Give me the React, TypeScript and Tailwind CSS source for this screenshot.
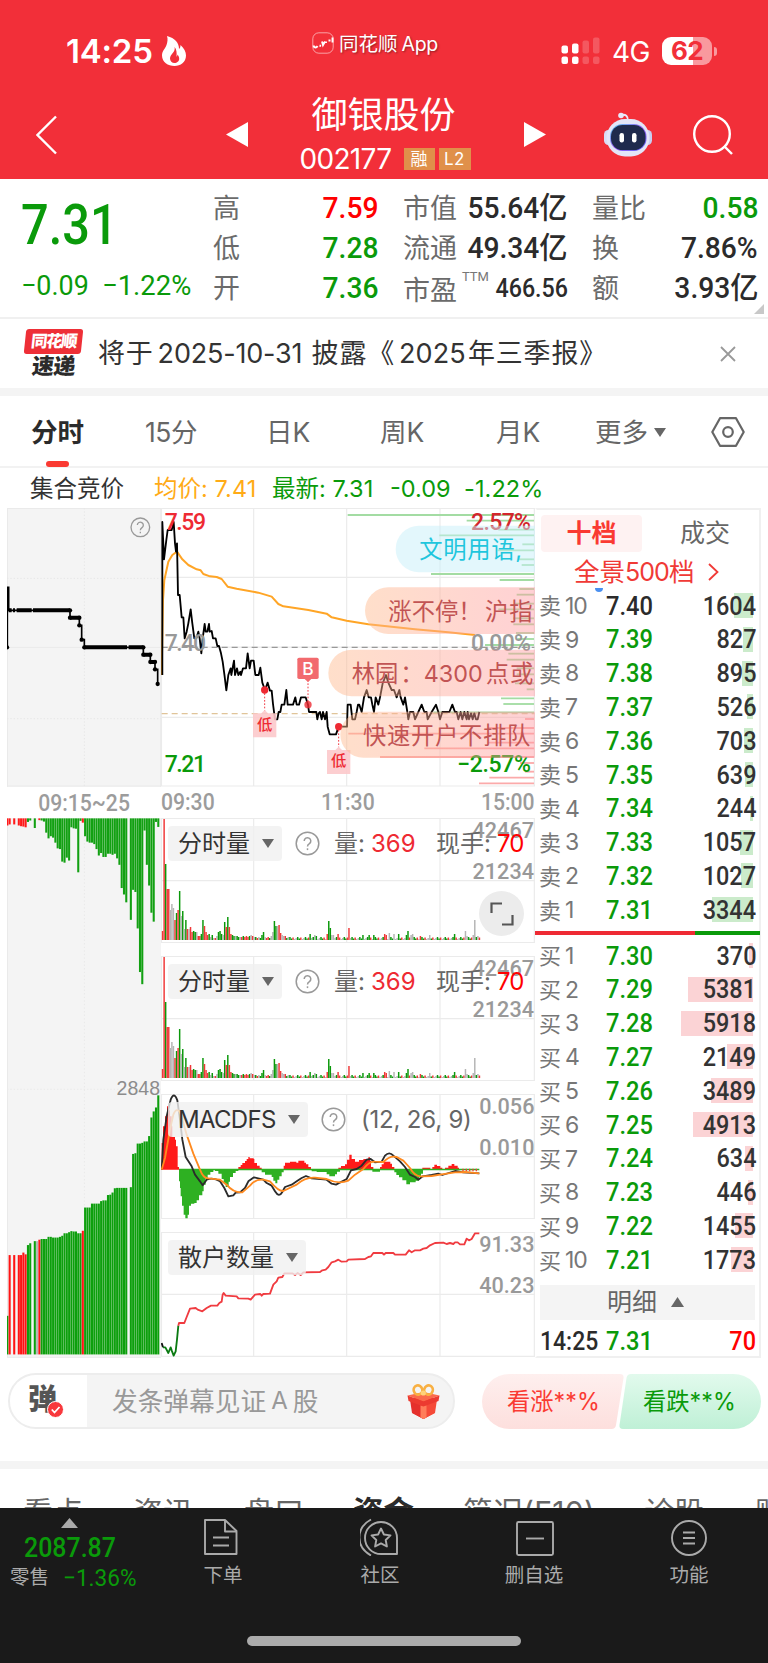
import React from 'react';
import clsx from 'clsx';

type Tone = 'r' | 'g' | 'x';

const FILL: Record<Tone, string> = { r: '#f03838', g: '#0a980a', x: '#b5b5b5' };
const GREEN = '#0a9a0a';

// ---------- market data ----------

const asks = [
  ['10', '7.40', 1604], ['9', '7.39', 827], ['8', '7.38', 895], ['7', '7.37', 526], ['6', '7.36', 703],
  ['5', '7.35', 639], ['4', '7.34', 244], ['3', '7.33', 1057], ['2', '7.32', 1027], ['1', '7.31', 3344],
] as [string, string, number][];

const bids = [
  ['1', '7.30', 370], ['2', '7.29', 5381], ['3', '7.28', 5918], ['4', '7.27', 2149], ['5', '7.26', 3489],
  ['6', '7.25', 4913], ['7', '7.24', 634], ['8', '7.23', 446], ['9', '7.22', 1455], ['10', '7.21', 1773],
] as [string, string, number][];

const pricePoints =
  '22,525 22,66 27,178 34,120 38,90 50,90 56,66 60,130 63,155 66,130 69,285 74,285 80,352 85,352 89,415 95,395 100,370 107,328 112,370 118,415 124,415 130,395 134,415 139,460 143,415 149,372 152,395 157,395 162,372 164,395 170,393 174,415 182,415 187,438 192,438 198,460 203,485 209,530 214,571 220,525 227,505 229,525 237,482 240,525 246,505 250,525 256,515 258,525 264,505 273,505 278,460 284,505 288,482 296,482 301,525 311,525 316,503 322,548 330,570 338,548 345,572 350,572 354,612 360,658 367,658 371,636 376,636 380,614 388,614 394,570 398,614 414,614 421,592 425,614 432,614 438,592 452,592 459,614 462,636 484,636 487,658 491,640 495,636 500,658 504,636 510,658 515,636 518,680 524,703 543,703 551,680 576,680 578,614 587,614 592,658 600,658 605,636 609,614 613,614 620,636 627,592 635,570 641,592 648,592 652,614 657,636 662,592 670,614 675,592 683,550 693,525 700,548 710,570 717,570 725,592 733,570 737,592 745,614 750,592 757,636 760,658 765,636 775,636 780,658 790,636 800,614 808,636 815,636 818,658 830,636 843,614 850,636 855,658 862,636 883,636 892,614 900,636 905,636 910,658 917,636 922,658 928,636 935,658 938,636 942,658 948,640 953,658 958,640 963,658 968,658 973,636';

const averagePoints =
  '20,525 24,300 28,240 40,185 52,165 66,155 82,178 100,195 125,208 137,211 145,222 165,229 185,231 200,237 218,260 245,266 310,278 350,290 370,312 385,319 460,330 515,341 530,352 575,362 640,373 780,388 880,397 960,405';

// [y, start x] of the traded-volume-by-price strips
const greenStrips = [
  [45, 578], [62, 935], [89, 1030], [106, 853], [133, 1102], [151, 1028], [178, 1090], [195, 1100], [222, 828], [240, 1034],
  [267, 1093], [284, 1085], [311, 1080], [328, 1030], [355, 1075], [373, 1075], [399, 1083], [417, 1087], [435, 990],
  [461, 1060], [479, 1055], [505, 1085], [523, 1085], [550, 1080], [568, 1115], [595, 1038], [612, 1045], [637, 835],
];
const redStrips = [
  [657, 1110], [684, 1000], [701, 580], [728, 1000], [745, 808], [771, 675], [789, 1095], [815, 1110], [833, 1003], [850, 972],
];

const volumeHead = [
  9, 121, 76, 51, 51, 30, 36, 32, 20, 27, 30, 49, 24, 29, 11, 20, 11, 11, 13, 8, 9, 8, 8, 4, 4, 6, 20, 14, 8, 5, 6, 3, 5, 2, 2, 4, 8, 9, 6,
  5, 18, 13, 23, 13, 6, 5, 4, 4, 4, 3, 3, 3, 4, 3, 4, 3, 4, 5, 4, 3, 3, 2, 3, 2, 5, 8, 3, 2, 3, 2, 4, 8, 19, 14, 14, 15, 7, 5, 4, 4, 2, 3,
];
const volumeTone = 'rrgrrxxxrgrgxgxgrxrrggxrrggrrrgxgxrxgggxgrgrrggxggxrgrrrgxrxgrxgggxrrgxxggxrrxxrgxg';
const volumeSpikes: Record<number, [number, Tone]> = {
  95: [6, 'g'], 98: [5, 'x'], 99: [4, 'g'], 106: [6, 'r'], 107: [19, 'g'], 108: [12, 'g'], 109: [5, 'x'], 110: [5, 'x'], 113: [6, 'r'],
  120: [12, 'r'], 129: [5, 'g'], 133: [5, 'g'], 136: [5, 'g'], 143: [6, 'r'], 144: [5, 'r'], 146: [7, 'x'], 149: [6, 'x'], 152: [6, 'g'],
  157: [5, 'g'], 158: [9, 'g'], 160: [5, 'x'], 161: [6, 'x'], 166: [4, 'r'], 172: [5, 'x'], 188: [6, 'g'], 195: [9, 'x'], 196: [4, 'x'],
  200: [5, 'x'], 201: [20, 'x'], 203: [4, 'x'],
};
const volumeBars = Array.from({ length: 205 }, (_, i): [number, Tone] => {
  if (i < volumeHead.length) return [volumeHead[i], volumeTone[i] as Tone];
  return volumeSpikes[i] ?? [1 + ((i * 7) % 5) / 2, 'xgrxg'[(i * 3) % 5] as Tone];
});

const auctionTop = [
  20, 17, 0, 17, 0, 20, 22, 23, 25, 10, 6, 0, 27, 0, 5, 6, 9, 40, 56, 50, 54, 68, 84, 86, 121, 124, 110, 118, 25, 28, 29, 151, 7, 12, 50, 65,
  68, 68, 72, 86, 104, 97, 108, 108, 99, 99, 102, 99, 112, 130, 195, 213, 235, 0, 284, 200, 206, 308, 430, 464, 34, 130, 188, 264, 289, 10, 24,
];
const auctionBottom = [
  1415, 1245, 0, 1245, 0, 1245, 1245, 1238, 1243, 1217, 1212, 0, 1206, 1206, 1202, 1200, 1200, 1200, 1194, 1194, 1196, 1196, 1196, 1194, 1191,
  1184, 1184, 1181, 1178, 1179, 1179, 1184, 1184, 1177, 1112, 1112, 1112, 1101, 1101, 1101, 1101, 1094, 1092, 1092, 1077, 1076, 1070, 1058,
  1057, 1057, 1057, 1057, 1057, 0, 1055, 962, 960, 933, 933, 931, 927, 927, 912, 860, 843, 832, 798,
];
const auctionRed = [1, 3, 5, 6, 7, 8, 14, 33];

const macdRed = [
  'M20 270V190H24V140H30V110H36V80H40V92H45V110H50V140H52V172H60V180H63V200H68V262H72V270Z',
  'M250 270V262H257V256H262V250H270V244H275V238H280V232H284V236H296V238H298V250H306V258H314V264H320V270Z',
  'M386 270V258H390V249H405V246H424V249H430V243H448V249H453V254H460V262H468V270Z',
  'M550 270V264H558V259H570V254H576V240H583V225H590V238H600V246H612V241H625V238H640V233H645V244H648V262H655V270Z',
  'M675 270V262H680V254H686V246H706V252H711V262H718V270Z',
  'M802 270V264H826V270ZM832 270V262H838V255H846V259H856V264H862V270ZM870 270V264H880V258H890V253H898V258H908V264H912V270Z',
];
const macdGreen = [
  'M72 268V305H75V325H77V350H81V378H86V405H91V416H98V405H102V378H108V372H118V370H125V362H132V347H142V335H146V315H152V295H158V285H166V277H175V268Z',
  'M180 268V274H190V282H200V298H206V310H212V322H221V306H225V292H234V280H242V274H250V268Z',
  'M320 268V278H330V285H350V292H355V303H361V311H367V300H373V290H380V278H386V268Z',
  'M470 268V275H485V277H515V284H523V290H540V284H546V276H555V268ZM652 268V276H675V268Z',
  'M718 268V278H724V286H732V293H742V302H754V314H765V308H782V303H792V292H798V282H804V268Z',
];
const difPath =
  'M20 270L25 180L35 110L47 60Q57 34 67 62L75 120L82 180L92 232L110 260L120 285L135 305L143 317L155 300Q175 292 195 305L208 325L220 350L235 347L242 339L255 338L270 325L280 305L297 293L325 300L335 310L350 318L360 335Q372 355 382 337L390 322L410 315L425 305L440 295L453 289L470 296L515 300L530 312L543 315L575 298L588 272L605 268L620 258L635 240L647 238L660 248L680 246L690 228Q703 214 715 228L735 245L750 262L765 285L780 292L790 300L803 290L830 286L850 282L862 286L900 274L925 278L973 281';
const deaPath =
  'M20 270L30 235L45 150L55 105Q66 78 78 105L95 165L115 222L135 270Q145 297 160 296L195 300L215 315Q235 340 262 338L285 318Q300 298 325 300L345 305Q370 335 385 334L425 315Q450 292 480 294L515 298Q550 315 580 303L600 285L625 268Q643 244 660 246L685 247Q705 226 725 232L745 243L765 265Q780 292 800 290L830 289L860 284L900 278L930 277L973 281';
const retailPoints =
  '70,738 72,730 88,730 95,712 105,687 122,685 128,690 142,695 155,685 168,678 187,678 193,670 200,666 203,645 206,640 212,648 245,650 250,656 280,657 287,660 300,645 316,643 320,648 325,643 345,642 355,615 365,605 370,594 382,592 388,581 412,581 420,586 428,580 437,586 445,578 495,577 502,572 512,570 520,562 530,548 540,545 550,540 560,546 575,545 580,540 630,538 640,532 648,530 655,520 682,520 687,525 692,520 715,520 720,525 752,525 762,512 770,518 780,512 795,512 805,507 815,505 825,497 840,490 865,489 875,493 885,490 895,493 900,488 908,488 915,494 928,494 935,477 942,482 950,478 960,461 973,461';

// ---------- small pieces ----------

const Din = ({ className, children }: { className?: string; children: React.ReactNode }) => (
  <span className={clsx("inline-block whitespace-nowrap font-['Roboto','Noto_Sans_CJK_SC',sans-serif]", className)}>{children}</span>
);

const Down = ({ className }: { className?: string }) => (
  <svg className={className} width="12" height="9" viewBox="0 0 12 9">
    <path d="M0 0H12L6 9Z" fill="#666" />
  </svg>
);

const Help = () => (
  <svg width="25" height="25" viewBox="0 0 25 25" fill="none" stroke="#999" strokeWidth="1.5">
    <circle cx="12.5" cy="12.5" r="11.3" />
    <path d="M9.2 10a3.3 3.3 0 1 1 5.2 2.7c-1.2.8-1.9 1.3-1.9 2.8" />
    <path d="M12.5 17.3v1.8" />
  </svg>
);

function Stat({ label, value, tone = 'text-[#2b2b2b]' }: { label: string; value: string; tone?: string }) {
  return (
    <div className="flex h-10 items-center justify-between">
      <span className="-ml-px pt-px text-[27px] leading-none text-[#6b6b6b]">{label}</span>
      <Din className={clsx('origin-right scale-x-[.94] text-[30px] leading-10 font-medium', tone)}>{value}</Din>
    </div>
  );
}

function Header() {
  return (
    <header className="h-[179px] bg-[#f22f39] text-white">
      <div className="flex h-[94px] items-center pt-2">
        <span className="ml-[66px] w-[87px] text-[33px] leading-none font-semibold tracking-[-.2px] whitespace-nowrap">14:25</span>
        <svg className="ml-[9px] shrink-0" width="24" height="30" viewBox="0 0 24 30">
          <path d="M5 0C13 2 17 7 17 13c1-1 1.500-2 1.500-4C22 12 24 16 24 19.500 24 26 18.500 30 12.500 30 6 30 0 26 0 19.500 0 15 3 13 4.500 9 5.500 6 6 3 5 0Z" fill="#fff" />
          <path d="M12.500 11c1.500 5-4.500 7-4.500 11.500 0 2.500 2 4.500 4.500 4.500s4.700-1.800 4.700-4.300c0-1.700-.7-3-1.700-4.200 0 1-.4 1.700-1 2.200C15 17 14.500 13 12.500 11Z" fill="#f22f39" />
        </svg>
        <div className="-mt-4 ml-[126px] flex w-[128px] items-center gap-[5px]">
          <svg className="shrink-0" width="22" height="22" viewBox="0 0 22 22" fill="none" stroke="#fff">
            <rect x=".8" y=".8" width="20.400" height="20.400" rx="6" opacity=".55" />
            <path d="M1.500 13.500c.5 2.500 3 2.500 4 .5M7.500 13.500l1.500.5M10 9.500l1 3.500 2-3.500M14 9.500v1.500M16.500 8.500h2M20.500 5.500v5" strokeWidth="1.900" />
          </svg>
          <span className="flex items-center pt-[3px] text-[19.5px] leading-none whitespace-nowrap [text-shadow:1px_1px_2px_#0006]">
            同花顺<span className="ml-1 text-[19.5px] tracking-[-.3px]">App</span>
          </span>
        </div>
        <svg className="ml-[121px]" width="40" height="28" viewBox="0 0 40 28" fill="#fff">
          <rect x=".5" y="8.500" width="6.500" height="8" rx="2" />
          <rect x="11" y="6.500" width="6.500" height="10" rx="2" />
          <rect x="21.500" y="3.500" width="6.500" height="13" rx="2" opacity=".2" />
          <rect x="32" y=".5" width="6.500" height="16" rx="2" opacity=".2" />
          <rect x=".5" y="19.500" width="6.500" height="7.500" rx="2" />
          <rect x="11" y="19.500" width="6.500" height="7.500" rx="2" />
          <rect x="21.500" y="19.500" width="6.500" height="7.500" rx="2" opacity=".2" />
          <rect x="32" y="19.500" width="6.500" height="7.500" rx="2" opacity=".2" />
        </svg>
        <span className="ml-[11px] w-[38px] pt-[2px] text-[28px] leading-none tracking-[-.6px]">4G</span>
        <div className="ml-[12px] flex h-7 w-[50px] items-center justify-center rounded-[9px] bg-linear-to-r from-white from-62% to-[#f9999e] to-62% text-[26px] leading-none font-bold tracking-tight text-[#f22f39]">62</div>
        <div className="ml-[2px] h-[9px] w-[3px] rounded-r-full bg-[#f9999e]" />
      </div>
      <div className="flex h-[85px] items-center">
        <svg className="-mt-[3px] ml-9" width="21" height="40" viewBox="0 0 21 40" fill="none" stroke="#fff" strokeWidth="2.400">
          <path d="M20 1.500 1.500 20 20 38.500" />
        </svg>
        <svg className="-mt-[4px] ml-[169px]" width="22" height="25" viewBox="0 0 22 25"><path d="M22 0V25L0 12.500Z" fill="#fff" /></svg>
        <div className="flex h-[85px] w-[276px] flex-col items-center">
          <div className="-ml-[5px] h-[42px] text-[36px] leading-[42px]">御银股份</div>
          <div className="flex h-[46px] items-center gap-1 pt-[2px]">
            <span className="mr-[5px] -ml-[2px] w-[95px] text-[28px] leading-none tracking-[-.7px]">002177</span>
            <span className="h-[22px] w-[31px] bg-[#e0904a] text-center text-[17px] leading-[22px]">融</span>
            <span className="h-[22px] w-8 bg-[#e0904a] text-center text-[17px] leading-[22px] tracking-[.5px]">L2</span>
          </div>
        </div>
        <svg className="-mt-[4px]" width="22" height="25" viewBox="0 0 22 25"><path d="M0 0V25L22 12.500Z" fill="#fff" /></svg>
        <svg className="-mt-[5px] ml-[58px]" width="48" height="45" viewBox="0 0 48 45">
          <defs>
            <linearGradient id="visor" x1="0" x2="1" y1="0" y2="1">
              <stop offset="0" stopColor="#59d4f0" />
              <stop offset=".5" stopColor="#9a5cf5" />
              <stop offset="1" stopColor="#5a63f0" />
            </linearGradient>
          </defs>
          <path d="M17 3c5-1 7 1 7 6" fill="none" stroke="#e8e9fb" strokeWidth="1.800" />
          <circle cx="17" cy="3.500" r="2.800" fill="#e8e9fb" />
          <rect x="0" y="18" width="9" height="15" rx="4.500" fill="#d9dcf5" />
          <rect x="39" y="18" width="9" height="15" rx="4.500" fill="#c9cdf0" />
          <rect x="2.500" y="7" width="43" height="37.500" rx="18.500" fill="#e3e5f8" />
          <rect x="6" y="12" width="36.500" height="27" rx="12.500" fill="url(#visor)" />
          <rect x="7" y="13" width="34.500" height="25" rx="11.500" fill="#1f2a4d" />
          <rect x="15.500" y="21" width="4.500" height="9.500" rx="2.200" fill="#fff" />
          <rect x="28" y="21" width="4.500" height="9.500" rx="2.200" fill="#fff" />
        </svg>
        <svg className="-mt-[3px] ml-[41px]" width="40" height="40" viewBox="0 0 40 40" fill="none" stroke="#fff" strokeWidth="2.400">
          <circle cx="19" cy="19" r="17.800" />
          <path d="M31 31 39 39" />
        </svg>
      </div>
    </header>
  );
}

function Quote() {
  return (
    <section className="relative flex h-[140px] border-b-2 border-[#f0f0f0] pt-[9px]">
      <div className="w-[214px] pl-[21px] text-[#0a9a0a]">
        <Din className="mt-[5px] block h-[64px] origin-left scale-x-[.87] text-[56px] leading-[64px] font-medium">7.31</Din>
        <div className="flex h-[38px] items-center pt-[19px]">
          <Din className="w-[81px] origin-left scale-x-[.96] text-[28px] leading-none">−0.09</Din>
          <Din className="origin-left scale-x-[.98] text-[28px] leading-none">−1.22%</Din>
        </div>
      </div>
      <div className="w-[164px]">
        <Stat label="高" value="7.59" tone="text-[#ff0000]" />
        <Stat label="低" value="7.28" tone="text-[#0a9a0a]" />
        <Stat label="开" value="7.36" tone="text-[#0a9a0a]" />
      </div>
      <div className="ml-[26px] w-[164px]">
        <Stat label="市值" value="55.64亿" />
        <Stat label="流通" value="49.34亿" />
        <div className="flex h-10 items-center">
          <span className="-ml-px pt-1 text-[27px] leading-none whitespace-nowrap text-[#6b6b6b]">市盈</span>
          <Din className="-mt-6 ml-[5px] w-[28px] text-[13px] leading-none text-[#777]">TTM</Din>
          <Din className="-ml-[12px] flex-1 origin-right scale-x-[.93] text-right text-[25px] leading-none font-medium text-[#2b2b2b]">466.56</Din>
        </div>
      </div>
      <div className="ml-[25px] w-[165px]">
        <Stat label="量比" value="0.58" tone="text-[#0a9a0a]" />
        <Stat label="换" value="7.86%" />
        <Stat label="额" value="3.93亿" />
      </div>
      <svg className="absolute right-1 bottom-[3px]" width="10" height="10" viewBox="0 0 10 10"><path d="M10 0V10H0Z" fill="#c8c8c8" /></svg>
    </section>
  );
}

function Notice() {
  return (
    <section className="flex h-[77px] items-center border-b-8 border-[#f4f4f4]">
      <div className="ml-[25px] w-[73px]">
        <div className="flex h-[25px] w-[57px] -skew-x-6 items-center justify-center rounded-[3px] bg-[#ee2f37] text-[16.5px] leading-none font-black tracking-[-1.5px] text-white">同花顺</div>
        <div className="h-[25px] w-[57px] -skew-x-6 text-center text-[22px] leading-[25px] font-black tracking-[-.5px] text-[#2b2b2b]">速递</div>
      </div>
      <div className="flex text-[27px] leading-none tracking-[.8px] whitespace-nowrap text-[#333]">
        <span>将于</span>
        <span className="ml-[4px] w-[154px] tracking-[-.2px]">2025-10-31</span>
        <span>披露《</span>
        <span className="ml-[4px] w-[69px] tracking-[.1px]">2025</span>
        <span>年三季报》</span>
      </div>
      <svg className="mr-8 ml-auto" width="16" height="16" viewBox="0 0 16 16" stroke="#999" strokeWidth="1.800"><path d="M1 1 15 15M15 1 1 15" /></svg>
    </section>
  );
}

function PeriodTabs() {
  return (
    <nav className="flex h-[72px] items-center border-b-2 border-[#f2f2f2] pt-[2px] text-[26.5px] leading-none text-[#666]">
      <div className="relative ml-[31px] flex h-[70px] w-[114px] items-center font-bold text-[#2b2b2b]">
        分时
        <span className="absolute bottom-0 left-[15px] h-[6px] w-[23px] rounded-full bg-[#fa3a32]" />
      </div>
      <span className="w-[121px] tracking-[-.5px]">15分</span>
      <span className="w-[114px]">日K</span>
      <span className="w-[116px]">周K</span>
      <span className="w-[99px]">月K</span>
      <span>更多</span>
      <Down className="ml-[6px]" />
      <svg className="ml-[45px]" width="34" height="30" viewBox="0 0 34 30" fill="none" stroke="#666" strokeWidth="2.200">
        <path d="M9 1.200H25L32.700 15 25 28.800H9L1.300 15Z" strokeLinejoin="round" />
        <circle cx="17" cy="15" r="4.800" />
      </svg>
    </nav>
  );
}

function Summary() {
  return (
    <div className="flex h-[40px] items-center pt-[2px] text-[23.5px] leading-none whitespace-nowrap text-[#0a9a0a]">
      <span className="ml-[30px] w-[124px] text-[#333]">集合竞价</span>
      <span className="w-[118px] text-[#ffab16]">均价: <span className="tracking-[.2px]">7.41</span></span>
      <span className="w-[118px]">最新: <span className="tracking-[.1px]">7.31</span></span>
      <span className="w-[74px]">-0.09</span>
      <span className="tracking-[.1px]">-1.22%</span>
    </div>
  );
}

// ---------- charts ----------

function Auction() {
  const dots = [[22, 442], [211, 331], [211, 353], [239, 353], [239, 376], [246, 419], [254, 442], [431, 442], [431, 464], [452, 464], [452, 486], [466, 486], [466, 508], [474, 552]];
  return (
    <div className="w-[154px]">
      <svg className="block" width="154" height="279" viewBox="22 24 462 837">
        <rect x="22" y="24" width="462" height="837" fill="#f4f4f4" />
        <path d="M22 25.500H484M23.500 24V860M22 858H484M22 442H484M483 24V861" stroke="#eaeaea" strokeWidth="3" fill="none" />
        <path d="M254 24V858M22 235H484M22 656H484" stroke="#e6e6e6" strokeWidth="3" strokeDasharray="4 6" fill="none" />
        <path d="M23 442V262H27V331H211V353H239V376H246V419H254V442H431V464H452V486H466V508H474V552" fill="none" stroke="#000" strokeWidth="5" />
        <path d="M27 331H36M40 331H46M51 331H96M100 331H211M211 353H239M254 442H382M387 442H431M431 464H452M452 486H466" stroke="#000" strokeWidth="12" />
        {dots.map(([x, y], i) => <circle key={i} cx={x} cy={y} r="6.500" />)}
        <g fill="none" stroke="#999" strokeWidth="4">
          <circle cx="422" cy="82" r="28" />
          <path d="M413 75a9 9 0 1 1 14 8c-3 2-5 4-5 8M422 95v5" />
        </g>
      </svg>
      <div className="flex h-[32px] items-center justify-end pt-[2px] pr-[31px]">
        <Din className="origin-right scale-x-[.9] text-[23.5px] leading-none font-medium text-[#9c9c9c]">09:15~25</Din>
      </div>
      <div className="relative -mt-px">
        <svg className="block" width="154" height="540" viewBox="22 22 462 1511" preserveAspectRatio="none">
          <rect x="22" y="22" width="462" height="1511" fill="#f4f4f4" />
          <path d="M254 22V1532M22 781H484" stroke="#e9e9e9" strokeWidth="3" strokeDasharray="4 6" />
          <path d="M23.500 22V1532M22 1531H484" stroke="#eaeaea" strokeWidth="3" />
          {auctionTop.map((h, i) => (
            <rect key={i} x={20 + i * 6.86} y="23" width="6.200" height={h} fill={auctionRed.includes(i) || i === 0 ? '#ff1a1a' : '#12a012'} />
          ))}
          {auctionBottom.map((y, i) => y > 0 && (
            <rect key={i} x={20 + i * 6.86} y={y} width="6.200" height={1523 - y} fill={auctionRed.includes(i) ? '#ff1414' : i === 13 ? '#b5b5b5' : '#0d9f0d'} />
          ))}
        </svg>
        <span className="absolute top-[261px] right-[1px] font-['Liberation_Sans'] text-[19.5px] leading-none text-[#8c8c8c]">2848</span>
      </div>
    </div>
  );
}

function Marker({ x, y }: { x: number; y: number }) {
  return (
    <g>
      <path d={`M${x} ${y}V${y + 62}`} stroke="#f03a44" strokeWidth="3" strokeDasharray="5 5" />
      <path d={`M${x - 35} ${y + 70}h25l10 -10l10 10h25v72h-70z`} fill="#fcc9cb" fillOpacity=".9" />
      <circle cx={x} cy={y} r="11" fill="#ee2a33" />
      <text x={x} y={y + 119} fontSize="46" fontWeight="500" fill="#ee2a33" textAnchor="middle">低</text>
    </g>
  );
}

const Grid = ({ top, bottom }: { top: number; bottom: number }) => (
  <path
    d={`M18 ${top}H1140M18 ${(top + bottom) / 2}H1140M18 ${bottom}H1140M19.500 ${top}V${bottom}M296 ${top}V${bottom}M575 ${top}V${bottom}M855 ${top}V${bottom}M1138 ${top}V${bottom}`}
    stroke="#ebebeb"
    strokeWidth="3.500"
    fill="none"
  />
);

function PriceChart() {
  const din = { fontFamily: 'Roboto', fontSize: 69, fontWeight: 500, lengthAdjust: 'spacingAndGlyphs' as const };
  return (
    <svg className="block" width="374" height="279" viewBox="18 24 1122 837">
      <defs>
        <linearGradient id="warm" x1="0" x2="1">
          <stop offset="0" stopColor="#ffb98c" />
          <stop offset="1" stopColor="#ff9aa2" />
        </linearGradient>
      </defs>
      <Grid top={25} bottom={858} />
      <path d="M18 232H1140M18 652H1140" stroke="#ebebeb" strokeWidth="3.500" />
      <path d="M20 442H1138" stroke="#999" strokeWidth="3.500" strokeDasharray="18 12" />
      <path d="M20 641H1138" stroke="#e0c499" strokeWidth="4" strokeDasharray="18 12" />
      {greenStrips.map(([y, x]) => <path key={y} d={`M${x} ${y}H1137`} stroke="#a3dca3" strokeWidth="5.500" />)}
      {redStrips.map(([y, x]) => <path key={y} d={`M${x} ${y}H1137`} stroke="#fbaaaa" strokeWidth="5.500" />)}
      <polyline points={averagePoints} fill="none" stroke="#ffa526" strokeWidth="6" strokeLinejoin="round" />
      <polyline points={pricePoints} fill="none" stroke="#000" strokeWidth="5.500" strokeLinejoin="round" />
      <g {...din}>
        <text x="29" y="91" textLength="124" fill="#ee2a33">7.59</text>
        <text x="29" y="454" textLength="124" fill="#999">7.40</text>
        <text x="29" y="817" textLength="124" fill={GREEN}>7.21</text>
        <text x="948" y="91" textLength="180" fill="#d3262c">2.57%</text>
        <text x="948" y="454" textLength="180" fill="#999">0.00%</text>
        <text x="906" y="817" textLength="222" fill={GREEN}>−2.57%</text>
      </g>
      <Marker x={329} y={570} />
      <Marker x={551} y={680} />
      <path d="M459 540V605" stroke="#f03a44" strokeWidth="3" strokeDasharray="5 5" />
      <circle cx="459" cy="614" r="11" fill="#ee2a33" fillOpacity=".8" />
      <rect x="427" y="473" width="64" height="64" rx="5" fill="#f26a6e" />
      <path d="M449 537h20l-10 9z" fill="#f26a6e" />
      <text x="459" y="524" fontSize="52" fontWeight="500" fill="#fff" textAnchor="middle" fontFamily="Inter">B</text>
      <path d="M1140 77H792a70 70 0 0 0 0 140H1140Z" fill="#c8eff9" fillOpacity=".5" />
      <path d="M1140 262H700a70 70 0 0 0 0 140H1140Z" fill="url(#warm)" fillOpacity=".46" />
      <path d="M1140 449H590a70 70 0 0 0 0 140H1140Z" fill="url(#warm)" fillOpacity=".46" />
      <path d="M1140 635H625a69 69 0 0 0 0 138H1140Z" fill="url(#warm)" fillOpacity=".46" />
      <g fontSize="70" fill="#c25454">
        <text x="793" y="174" fill="#1fc6dd" textLength="308">文明用语,</text>
        <text x="700" y="360">涨不停！</text>
        <text x="990" y="360" textLength="143">沪指</text>
        <text x="590" y="547" textLength="140">林园</text>
        <text x="736" y="547">：</text>
        <text x="806" y="546" textLength="177">4300</text>
        <text x="993" y="547" textLength="142">点或</text>
        <text x="624" y="733" textLength="502">快速开户不排队</text>
      </g>
    </svg>
  );
}

function AxisLabels({ values }: { values: [string, string] }) {
  return (
    <div className="absolute top-[1px] right-[1px] text-right text-[#999]">
      {values.map((v) => (
        <div key={v} className="flex h-[41px] justify-end">
          <Din className="origin-right scale-x-[.96] text-[22.5px] leading-[23px] font-medium">{v}</Din>
        </div>
      ))}
    </div>
  );
}

function Indicator({ title, width, axis, children, extra }: {
  title: React.ReactNode;
  width: string;
  axis: [string, string];
  children: React.ReactNode;
  extra?: React.ReactNode;
}) {
  return (
    <div className="relative mb-[13px] h-[125px]">
      {children}
      <AxisLabels values={axis} />
      <div className="absolute top-[8px] left-[7px] flex h-[35px] items-center text-[24px] leading-none whitespace-nowrap text-[#666]">
        <div className={clsx('flex h-[35px] items-center justify-between rounded-[4px] bg-[#f0f0f0]/80 pr-[8px] pl-[10px] text-[#333]', width)}>
          {title}
          <Down />
        </div>
        {extra}
      </div>
    </div>
  );
}

function Volume({ expand }: { expand?: boolean }) {
  return (
    <Indicator
      title="分时量"
      width="w-[114px]"
      axis={['42467', '21234']}
      extra={
        <>
          <span className="ml-[13px]"><Help /></span>
          <span className="ml-[14px] w-[37px]">量:</span>
          <span className="w-[65px] text-[24px] text-[#ee2a33]">369</span>
          <span className="w-[61px]">现手:</span>
          <span className="text-[24px] tracking-[-1px] text-[#ff0000]">70</span>
        </>
      }
    >
      <svg className="block" width="374" height="125" viewBox="18 25 1122 375">
        <Grid top={26.5} bottom={399} />
        {volumeBars.map(([h, tone], i) => (
          <rect key={i} x={20.500 + i * 4.660} y={391 - h * 3} width="4.400" height={h * 3} fill={FILL[tone]} />
        ))}
      </svg>
      {expand && (
        <div className="absolute top-[73px] right-[11px] flex size-[45px] items-center justify-center rounded-full bg-[#ececec]">
          <svg width="24" height="24" viewBox="0 0 24 24" fill="none" stroke="#555" strokeWidth="2.200"><path d="M1.500 11V1.500H12M22.500 13V22.500H12" /></svg>
        </div>
      )}
    </Indicator>
  );
}

function Charts() {
  return (
    <div className="w-[374px]">
      <PriceChart />
      <div className="flex h-[31px] items-center pt-px text-[23.5px] leading-none font-medium text-[#9c9c9c]">
        <Din className="w-[163px] origin-left scale-x-[.9]">09:30</Din>
        <Din className="w-[157px] origin-left scale-x-[.9]">11:30</Din>
        <Din className="flex-1 origin-right scale-x-[.9] text-right">15:00</Din>
      </div>
      <Volume expand />
      <Volume />
      <Indicator
        title={<span className="tracking-[-.7px]">MACDFS</span>}
        width="w-[140px]"
        axis={['0.056', '0.010']}
        extra={
          <>
            <span className="ml-[13px]"><Help /></span>
            <span className="ml-[15px] tracking-[-.2px]">(12, 26, 9)</span>
          </>
        }
      >
        <svg className="block" width="374" height="125" viewBox="18 43 1122 375" fill="none">
          <Grid top={44.5} bottom={417} />
          {macdRed.map((d) => <path key={d} d={d} fill="#ff1a1a" />)}
          {macdGreen.map((d) => <path key={d} d={d} fill="#2eb022" />)}
          <path d="M72 269.500H973" stroke="#2eb022" strokeWidth="4" />
          <path d="M922 271H968" stroke="#f03838" strokeWidth="8" strokeDasharray="4 6" />
          <path d={difPath} stroke="#2b2b2b" strokeWidth="5.500" strokeLinejoin="round" />
          <path d={deaPath} stroke="#ff8a1f" strokeWidth="5.500" strokeLinejoin="round" />
        </svg>
      </Indicator>
      <Indicator title="散户数量" width="w-[138px]" axis={['91.33', '40.23']}>
        <svg className="block" width="374" height="125" viewBox="18 457 1122 375" fill="none" strokeLinejoin="round">
          <Grid top={458.5} bottom={830} />
          <path d="M20 790L24 803" stroke="#111" strokeWidth="5.500" />
          <path d="M24 803H31L40 820L47 803L50 812L56 828L62 815L66 780L70 738" stroke="#0b7a12" strokeWidth="5.500" />
          <polyline points={retailPoints} stroke="#f03b40" strokeWidth="5.500" />
        </svg>
      </Indicator>
    </div>
  );
}

// ---------- order book ----------

function Level({ side, level, price, qty }: { side: '买' | '卖'; level: string; price: string; qty: number }) {
  return (
    <div className="relative flex h-[33.8px] items-center pt-px">
      <div
        className={clsx('absolute top-[4px] right-[8px] h-[25px]', side === '卖' ? 'bg-[#cbebcb]' : 'bg-[#fbd3d5]')}
        style={{ width: Math.max(qty / 82.4, 3) }}
      />
      <span className="relative ml-[4px] flex w-[67px] items-center text-[22px] leading-none text-[#777]">
        {side}<span className="ml-[4px] text-[23px] tracking-[-1px]">{level}</span>
      </span>
      <Din className={clsx('relative origin-left scale-x-[.93] text-[25.5px] leading-none font-medium', price === '7.40' ? 'text-[#2b2b2b]' : 'text-[#0a9a0a]')}>{price}</Din>
      <Din className="relative mr-[5px] ml-auto origin-right scale-x-[.92] text-[25.5px] leading-none font-medium text-[#333]">{qty}</Din>
    </div>
  );
}

function OrderBook() {
  return (
    <div className="h-[850px] w-[226px] border-x-2 border-y-2 border-[#f0f0f0] border-l-transparent">
      <div className="-mx-[2px]">
        <div className="flex h-[42px] items-end text-[25px] leading-none">
          <div className="ml-[6px] flex h-[37px] w-[101px] items-center justify-center rounded-[4px] bg-[#fef2f2] font-bold text-[#fa3a32]">十档</div>
          <div className="flex h-[37px] flex-1 items-center justify-center pl-[7px] text-[#666]">成交</div>
        </div>
        <div className="flex h-[37px] items-center pt-[3px] pl-[39px] text-[25.5px] leading-none text-[#f03a36]">
          全景<span className="w-[44px] text-[25px] tracking-[-1px]">500</span>档
          <svg className="ml-[13px]" width="11" height="18" viewBox="0 0 11 18" fill="none" stroke="#f03a36" strokeWidth="1.800"><path d="M1 1 9.500 9 1 17" /></svg>
        </div>
        <div className="relative">
          <div className="absolute top-[-1px] left-[60px] h-1 w-2 rounded-b-full bg-[#4a90f0]" />
          {asks.map(([level, price, qty]) => <Level key={level} side="卖" level={level} price={price} qty={qty} />)}
        </div>
        <div className="my-1 flex h-1 pr-px">
          <div className="w-[160px] bg-[#ee2a33]" />
          <div className="flex-1 bg-[#0a9a0a]" />
        </div>
        {bids.map(([level, price, qty]) => <Level key={level} side="买" level={level} price={price} qty={qty} />)}
        <div className="mt-2 mr-[6px] ml-[5px] flex h-[35px] items-center bg-[#f4f4f4] pl-[67px] text-[25px] leading-none text-[#666]">
          明细
          <svg className="ml-[14px]" width="13" height="10" viewBox="0 0 13 10"><path d="M6.500 0 13 10H0Z" fill="#666" /></svg>
        </div>
        <div className="flex h-[36px] items-center pt-[8px] text-[25.5px] leading-none font-medium">
          <Din className="ml-[5px] w-[66px] origin-left scale-x-[.9] text-[#2b2b2b]">14:25</Din>
          <Din className="origin-left scale-x-[.93] text-[#0a9a0a]">7.31</Din>
          <Din className="mr-[5px] ml-auto origin-right scale-x-[.92] text-[#ff0000]">70</Din>
        </div>
      </div>
    </div>
  );
}

// ---------- bottom ----------

function CommentBar() {
  return (
    <div className="mt-[16px] flex h-[56px] items-center">
      <div className="ml-2 flex h-[56px] w-[447px] items-center overflow-hidden rounded-full border-2 border-[#ededed] bg-[#f4f4f4]">
        <div className="relative h-full w-[77px] bg-white">
          <span className="absolute top-[9px] left-[18px] text-[29px] leading-[32px] font-black text-[#555]">弹</span>
          <svg className="absolute top-[26px] left-[37px]" width="17" height="17" viewBox="0 0 17 17">
            <circle cx="8.500" cy="8.500" r="8" fill="#f8383c" stroke="#fff" />
            <path d="M4.800 8.500 7.500 11.500 12.500 6" fill="none" stroke="#fff" strokeWidth="1.800" />
          </svg>
        </div>
        <div className="ml-[25px] flex items-center pt-px text-[25.7px] leading-none whitespace-nowrap text-[#999]">
          发条弹幕见证<span className="mx-[5px] text-[24px]">A</span>股
        </div>
        <svg className="mr-[13px] ml-auto" width="33" height="35" viewBox="0 0 33 35">
          <path d="M4 14 29 14 27.500 29 16.500 35 5.500 29Z" fill="#f23a30" />
          <path d="M3 15.500 16.500 20V35L5 29Z" fill="#e5302c" />
          <path d="M16.500 20 30 15.500 28 29 16.500 35Z" fill="#f54a38" />
          <path d="M.5 11.500 16.500 8 32.500 11.500 16.500 17.500Z" fill="#fb6a4c" />
          <path d="M.5 11.500 16.500 17.500 32.500 11.500 31.500 17 16.500 22.500 1.500 17Z" fill="#ec3a30" />
          <path d="M13.500 21.500 16.500 22.500 19.500 21.500V33.500L16.500 35 13.500 33.500Z" fill="#ff7d5a" />
          <ellipse cx="11" cy="6" rx="4.300" ry="4.600" fill="none" stroke="#f8b043" strokeWidth="2.600" transform="rotate(-15 11 6)" />
          <ellipse cx="21.500" cy="6" rx="4.300" ry="4.600" fill="none" stroke="#f8b043" strokeWidth="2.600" transform="rotate(15 21.500 6)" />
          <circle cx="16.300" cy="9" r="2.600" fill="#ffd27a" />
        </svg>
      </div>
      <div className="relative ml-[27px] h-[55px] w-[279px]">
        <svg className="block" width="279" height="55" viewBox="0 0 279 55">
          <defs>
            <linearGradient id="up" x1="0" x2="0" y1="0" y2="1"><stop offset="0" stopColor="#feefee" /><stop offset="1" stopColor="#fddfdd" /></linearGradient>
            <linearGradient id="down" x1="0" x2="0" y1="0" y2="1"><stop offset="0" stopColor="#e2faed" /><stop offset="1" stopColor="#bff0d6" /></linearGradient>
          </defs>
          <path d="M27.500 0H138q4 0 3.500 4L134 51q-.6 4-4.500 4H27.500a27.500 27.500 0 0 1 0-55Z" fill="url(#up)" />
          <path d="M149 0H251.500a27.500 27.500 0 0 1 0 55H141q-4 0-3.500-4L144.500 4q.6-4 4.500-4Z" fill="url(#down)" />
        </svg>
        <div className="absolute inset-0 flex items-center pt-[2px] text-[24px] leading-none whitespace-nowrap">
          <span className="ml-[25px] w-[136px] origin-left scale-x-[.97] text-[#fa3a32]">看涨**%</span>
          <span className="origin-left scale-x-[.97] text-[#0a9a0a]">看跌**%</span>
        </div>
      </div>
    </div>
  );
}

function SectionTabs() {
  return (
    <div className="mt-8 flex h-[47px] overflow-hidden border-t-8 border-[#f4f4f4] text-[30px] leading-[86px] whitespace-nowrap text-[#666]">
      <span className="ml-[23px] w-[110px] shrink-0">看点</span>
      <span className="w-[111px] shrink-0">资讯</span>
      <span className="w-[109px] shrink-0">盘口</span>
      <span className="w-[110px] shrink-0 text-[30.5px] font-bold text-[#2b2b2b]">资金</span>
      <span className="w-[181px] shrink-0">简况<span className="tracking-[.3px]">(F10)</span></span>
      <span className="w-[111px] shrink-0">诊股</span>
      <span className="shrink-0">财务</span>
    </div>
  );
}

function NavItem({ label, className, children }: { label: string; className: string; children: React.ReactNode }) {
  return (
    <div className={clsx('flex flex-col items-center pt-[10px]', className)}>
      <svg width="40" height="38" viewBox="0 0 40 38" fill="none" stroke="#aaa" strokeWidth="1.900" strokeLinejoin="round">{children}</svg>
      <span className="mt-[9px] text-[19.500px] leading-[20px] text-[#aaa]">{label}</span>
    </div>
  );
}

function BottomNav() {
  return (
    <footer className="relative h-[155px] bg-[#1a1a1a]">
      <div className="flex">
        <div className="w-[142px]">
          <svg className="mt-[10px] ml-[61px]" width="17" height="10" viewBox="0 0 17 10"><path d="M8.500 0 17 10H0Z" fill="#aaa" /></svg>
          <Din className="mt-[6px] ml-[24px] block origin-left scale-x-[.89] text-[28px] leading-[28px] font-medium text-[#0a9a0a]">2087.87</Din>
          <div className="mt-[3px] ml-[10px] flex h-6 items-center">
            <span className="w-[53px] text-[19.500px] leading-none text-[#aaa]">零售</span>
            <Din className="origin-left scale-x-[.94] text-[24px] leading-none text-[#0a9a0a]">−1.36%</Din>
          </div>
        </div>
        <NavItem label="下单" className="ml-[41px] w-[80px]">
          <path d="M3 2H23L34.500 13V36H3Z" transform="translate(-1 0)" />
          <path d="M22 2V13.500H33.500M10 19.500H26M10 27.500H26" />
        </NavItem>
        <NavItem label="社区" className="ml-[77px] w-[80px]">
          <g transform="translate(-1.500 0)">
            <path d="M22.500 4a16 16 0 0 1 16 16V36H22.500a16 16 0 0 1 0-32Z" />
            <path d="M12.500 1.500C-3 10 -3 29 12.500 37.500" />
            <path d="M22.500 10.500 25.400 16.500 32 17.400 27.200 22 28.400 28.500 22.500 25.400 16.600 28.500 17.800 22 13 17.400 19.600 16.500Z" />
          </g>
        </NavItem>
        <NavItem label="删自选" className="ml-[74px] w-[80px]">
          <rect x="3" y="4" width="36" height="33" rx="1.500" />
          <path d="M12 20.500H30" />
        </NavItem>
        <NavItem label="功能" className="ml-[75px] w-[80px]">
          <circle cx="20" cy="20" r="17" />
          <path d="M14 14.500H26M14 20H26M14 25.500H26" />
        </NavItem>
      </div>
      <div className="absolute bottom-[17px] left-[247px] h-[10px] w-[274px] rounded-full bg-[#ababab]" />
    </footer>
  );
}

export default function App() {
  return (
    <div className="h-[1663px] w-[768px] overflow-hidden bg-white font-['Inter','Noto_Sans_CJK_SC',sans-serif]">
      <Header />
      <Quote />
      <Notice />
      <PeriodTabs />
      <Summary />
      <main className="ml-[7px] flex h-[849px]">
        <Auction />
        <Charts />
        <OrderBook />
      </main>
      <CommentBar />
      <SectionTabs />
      <BottomNav />
    </div>
  );
}
